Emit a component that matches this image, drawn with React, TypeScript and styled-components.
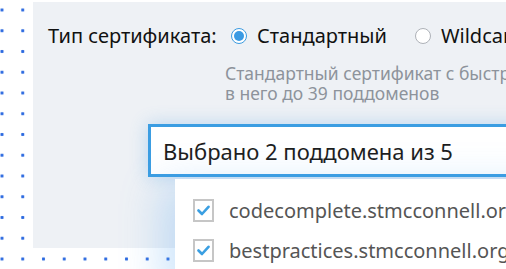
import React from "react";
import styled, { createGlobalStyle } from "styled-components";

const GlobalStyle = createGlobalStyle`
  html, body {
    margin: 0;
    padding: 0;
    background: #fff;
  }
  body {
    font-family: "Noto Sans", "Open Sans", sans-serif;
  }
`;

const Page = styled.div`
  width: 506px;
  height: 269px;
  overflow: hidden;
  box-sizing: border-box;
  padding: 2px 0 0 33px;
  background-color: #fff;
  background-image: radial-gradient(circle, #2c6ae0 1.3px, transparent 2px);
  background-size: 20.75px 20.75px;
  background-position: -8.4px -0.4px;
`;

const Panel = styled.div`
  width: 560px;
  height: 246px;
  box-sizing: border-box;
  padding: 20px 0 0 15px;
  background: #eef1f5;
`;

const Field = styled.div`
  display: grid;
  grid-template-columns: 177px 400px;
`;

const Label = styled.span`
  font-size: 20px;
  line-height: 28px;
  color: #111;
  white-space: nowrap;
`;

const Options = styled.div`
  display: flex;
  align-items: center;
  gap: 28px;
  padding-left: 6px;
  white-space: nowrap;
`;

const Option = styled.label`
  display: flex;
  align-items: center;
  gap: 10px;
  font-size: 20px;
  line-height: 28px;
  color: #111;
`;

const Radio = styled.span<{ $checked?: boolean }>`
  width: 16px;
  height: 16px;
  flex-shrink: 0;
  border-radius: 50%;
  box-sizing: border-box;
  background: #fff;
  border: 1px solid ${(p) => (p.$checked ? "#3b9be0" : "#aeb2b8")};
  display: flex;
  align-items: center;
  justify-content: center;

  &::after {
    content: "";
    width: 10px;
    height: 10px;
    border-radius: 50%;
    background: ${(p) => (p.$checked ? "#3a9ae3" : "transparent")};
  }
`;

const Hint = styled.p`
  grid-column: 2;
  margin: 13px 0 0;
  font-size: 17.5px;
  line-height: 20px;
  color: #8d939b;
  white-space: nowrap;
`;

const Select = styled.div`
  position: relative;
  margin: 21px 0 0 100px;
`;

const SelectBox = styled.div`
  height: 53px;
  box-sizing: border-box;
  border: 3px solid #3b9de2;
  background: #fff;
  padding-left: 12px;
  display: flex;
  align-items: center;
  font-size: 22px;
  color: #1d1d1d;
  white-space: nowrap;
  box-shadow: 0 0 18px rgba(60, 150, 230, 0.3);
`;

const Menu = styled.ul`
  position: absolute;
  top: calc(100% + 2px);
  left: 27px;
  width: 420px;
  height: 110px;
  margin: 0;
  padding: 11px 0 0 18px;
  box-sizing: border-box;
  list-style: none;
  background: #fff;
  box-shadow: -14px 6px 40px rgba(80, 160, 240, 0.28);
`;

const MenuItem = styled.li`
  display: flex;
  align-items: center;
  gap: 15px;
  height: 40px;
  font-size: 20px;
  color: #555;
  white-space: nowrap;
`;

const Check = styled.span`
  width: 21px;
  height: 23px;
  min-width: 21px;
  box-sizing: border-box;
  border: 2px solid #c6c6c6;
  display: flex;
  align-items: center;
  justify-content: center;
  flex-shrink: 0;
`;

const CheckMark = () => (
  <svg width="13" height="11" viewBox="0 0 13 11">
    <path d="M1.5 5.5 L5 9 L11.5 1.8" fill="none" stroke="#3a9fe2" strokeWidth="2.6" strokeLinecap="round" strokeLinejoin="round" />
  </svg>
);

const domains = ["codecomplete.stmcconnell.org", "bestpractices.stmcconnell.org"];

export default function App() {
  return (
    <>
      <GlobalStyle />
      <Page>
        <Panel>
          <Field>
            <Label>Тип сертификата:</Label>
            <Options>
              <Option>
                <Radio $checked />
                Стандартный
              </Option>
              <Option>
                <Radio />
                Wildcard
              </Option>
            </Options>
            <Hint>
              Стандартный сертификат с быстрой проверкой. Можно включить
              <br />в него до 39 поддоменов
            </Hint>
          </Field>
          <Select>
            <SelectBox>Выбрано 2 поддомена из 5</SelectBox>
            <Menu>
              {domains.map((d) => (
                <MenuItem key={d}>
                  <Check>
                    <CheckMark />
                  </Check>
                  {d}
                </MenuItem>
              ))}
            </Menu>
          </Select>
        </Panel>
      </Page>
    </>
  );
}
